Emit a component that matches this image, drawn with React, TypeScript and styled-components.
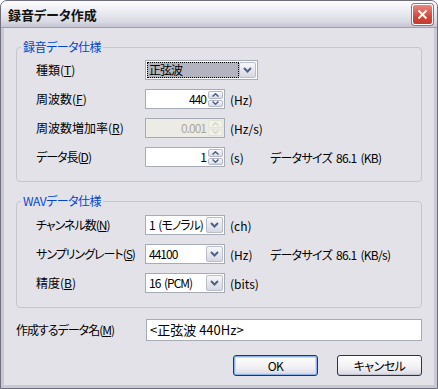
import React from 'react';
import styled, { createGlobalStyle } from 'styled-components';

const GlobalStyle = createGlobalStyle`
  * { box-sizing: border-box; }
  html, body { margin: 0; padding: 0; background: #ffffff; }
  body {
    font-family: "Noto Sans CJK JP", "Noto Sans", sans-serif;
    font-size: 12px;
    font-feature-settings: "palt";
    color: #000;
  }
`;

const FACE = '#e3e2e8';

const Window = styled.div`
  width: 438px;
  height: 389px;
  border: 1px solid #6f6f80;
  border-radius: 7px 7px 0 0;
  background: #c9c9d6;
  display: flex;
  flex-direction: column;
  overflow: hidden;
`;

const TitleBar = styled.div`
  flex: none;
  height: 27px;
  display: flex;
  align-items: center;
  justify-content: space-between;
  padding: 0 4px 0 7px;
  background: linear-gradient(#fdfdfe 0%, #ececf3 40%, #d9d9e4 80%, #c4c4d3 100%);
  border-bottom: 1px solid #a0a0b2;
`;

const Title = styled.span`
  font-size: 13px;
  font-weight: bold;
  color: #111;
`;

const CloseButton = styled.div`
  width: 21px;
  height: 21px;
  border: 1px solid #fff;
  border-radius: 3px;
  background: linear-gradient(#e88a7e, #d0493a 60%, #c23c30);
  box-shadow: 0 0 0 1px #b06a62;
  display: flex;
  align-items: center;
  justify-content: center;
`;

const Body = styled.div`
  flex: 1;
  margin: 0 3px 3px;
  background: ${FACE};
  padding: 19px 12px 0;
  display: flex;
  flex-direction: column;
`;

const Group = styled.div<{ $gap: number }>`
  border: 1px solid #c6c6cd;
  border-radius: 4px;
  padding: 0 0 14px 19px;
  display: flex;
  flex-direction: column;
  & + & {
    margin-top: 19px;
  }
  > div:last-child {
    margin-top: ${(p) => p.$gap}px;
  }
`;

const Caption = styled.div`
  align-self: flex-start;
  margin: -8px 0 0 -15px;
  padding: 0 2px;
  height: 14px;
  line-height: 14px;
  letter-spacing: -0.5px;
  background: ${FACE};
  color: #0046d5;
`;

const Rows = styled.div`
  display: flex;
  flex-direction: column;
  gap: 9px;
`;

const Row = styled.div`
  height: 20px;
  display: flex;
  align-items: center;
`;

const Label = styled.span<{ $width: number; $tight?: boolean }>`
  flex: none;
  width: ${(p) => p.$width}px;
  white-space: nowrap;
  line-height: 14px;
  letter-spacing: ${(p) => (p.$tight ? '-1px' : '0')};
`;

const Unit = styled.span`
  flex: none;
  width: 40px;
  margin-left: 5px;
  white-space: nowrap;
`;

const Info = styled.span`
  white-space: nowrap;
  letter-spacing: -0.7px;
  word-spacing: 2px;
`;

const Field = styled.div<{ $width: number; $disabled?: boolean }>`
  flex: none;
  width: ${(p) => p.$width}px;
  height: 20px;
  border: 1px solid #a5acb5;
  background: ${(p) => (p.$disabled ? '#ecebe6' : '#fff')};
  display: flex;
  padding: 1px;
`;

const Value = styled.span<{ $align?: string; $disabled?: boolean; $selected?: boolean }>`
  flex: 1;
  text-align: ${(p) => p.$align || 'left'};
  padding: 0 2px;
  line-height: 16px;
  white-space: nowrap;
  overflow: hidden;
  letter-spacing: -1px;
  word-spacing: 2px;
  color: ${(p) => (p.$disabled ? '#aca899' : '#000')};
  background: ${(p) => (p.$selected ? '#b3b4bf' : 'transparent')};
  outline: ${(p) => (p.$selected ? '1px dotted #000' : 'none')};
  outline-offset: -1px;
`;

const SpinButtons = styled.div`
  flex: none;
  width: 15px;
  display: flex;
  flex-direction: column;
  gap: 1px;
`;

const SpinHalf = styled.div<{ $disabled?: boolean }>`
  flex: 1;
  border-radius: 2px;
  border: 1px solid ${(p) => (p.$disabled ? '#e2e4d8' : '#b4b8c8')};
  background: ${(p) =>
    p.$disabled ? '#f2f2ea' : 'linear-gradient(#fafafc, #d8dae4)'};
  display: flex;
  align-items: center;
  justify-content: center;
`;

const DropButton = styled.div`
  flex: none;
  width: 17px;
  border-radius: 2px;
  border: 1px solid #b8bccb;
  background: linear-gradient(#f7f7fa, #d6d8e2);
  display: flex;
  align-items: center;
  justify-content: center;
`;

const NameRow = styled.div`
  margin-top: 11px;
  height: 22px;
  display: flex;
  align-items: center;
`;

const NameInput = styled.div`
  flex: 1;
  height: 22px;
  border: 1px solid #a5acb5;
  background: #fff;
  padding: 0 3px;
  line-height: 20px;
  font-size: 13px;
  white-space: nowrap;
`;

const ButtonRow = styled.div`
  margin-top: 14px;
  display: flex;
  justify-content: flex-end;
  gap: 19px;
`;

const PushButton = styled.div<{ $default?: boolean }>`
  width: 85px;
  height: 21px;
  border: 1px solid #1c3764;
  border-radius: 3px;
  background: linear-gradient(#ffffff, #f0f0f4 60%, #d8d8e2);
  box-shadow: ${(p) =>
    p.$default ? 'inset 0 0 0 1px #8eb4ee, inset 0 0 0 2px #c8daf6' : 'inset 0 -1px 0 #c4c4d0'};
  display: flex;
  align-items: center;
  justify-content: center;
  line-height: 14px;
  letter-spacing: -0.5px;
`;

const Arrow = ({ up, disabled }: { up?: boolean; disabled?: boolean }) => (
  <svg width="7" height="4" viewBox="0 0 7 4">
    <path
      d={up ? 'M0.5 3.5 L3.5 0.8 L6.5 3.5' : 'M0.5 0.5 L3.5 3.2 L6.5 0.5'}
      fill="none"
      stroke={disabled ? '#d4d6c8' : '#4d6185'}
      strokeWidth="1.5"
    />
  </svg>
);

const Chevron = () => (
  <svg width="9" height="6" viewBox="0 0 9 6">
    <path d="M1 1 L4.5 4.5 L8 1" fill="none" stroke="#4d6185" strokeWidth="2" />
  </svg>
);

const Spin = ({ value, disabled }: { value: string; disabled?: boolean }) => (
  <Field $width={80} $disabled={disabled}>
    <Value $align="right" $disabled={disabled}>
      {value}
    </Value>
    <SpinButtons>
      <SpinHalf $disabled={disabled}>
        <Arrow up disabled={disabled} />
      </SpinHalf>
      <SpinHalf $disabled={disabled}>
        <Arrow disabled={disabled} />
      </SpinHalf>
    </SpinButtons>
  </Field>
);

const Combo = ({ value, width, selected }: { value: string; width: number; selected?: boolean }) => (
  <Field $width={width}>
    <Value $selected={selected}>{value}</Value>
    <DropButton>
      <Chevron />
    </DropButton>
  </Field>
);

const App = () => (
  <>
    <GlobalStyle />
    <Window>
      <TitleBar>
        <Title>録音データ作成</Title>
        <CloseButton>
          <svg width="11" height="11" viewBox="0 0 11 11">
            <path d="M1.5 1.5 L9.5 9.5 M9.5 1.5 L1.5 9.5" stroke="#fff" strokeWidth="2" />
          </svg>
        </CloseButton>
      </TitleBar>
      <Body>
        <Group $gap={6}>
          <Caption>録音データ仕様</Caption>
          <Rows>
            <Row>
              <Label $width={109}>
                種類(<u>T</u>)
              </Label>
              <Combo value="正弦波" width={113} selected />
            </Row>
            <Row>
              <Label $width={109}>
                周波数(<u>F</u>)
              </Label>
              <Spin value="440" />
              <Unit>(Hz)</Unit>
            </Row>
            <Row>
              <Label $width={109}>
                周波数増加率(<u>R</u>)
              </Label>
              <Spin value="0.001" disabled />
              <Unit>(Hz/s)</Unit>
            </Row>
            <Row>
              <Label $width={109} $tight>
                データ長(<u>D</u>)
              </Label>
              <Spin value="1" />
              <Unit>(s)</Unit>
              <Info>データサイズ 86.1 (KB)</Info>
            </Row>
          </Rows>
        </Group>
        <Group $gap={7}>
          <Caption>WAVデータ仕様</Caption>
          <Rows>
            <Row>
              <Label $width={109} $tight>
                チャンネル数(<u>N</u>)
              </Label>
              <Combo value="1 (モノラル)" width={80} />
              <Unit>(ch)</Unit>
            </Row>
            <Row>
              <Label $width={109} $tight>
                サンプリングレート(<u>S</u>)
              </Label>
              <Combo value="44100" width={80} />
              <Unit>(Hz)</Unit>
              <Info>データサイズ 86.1 (KB/s)</Info>
            </Row>
            <Row>
              <Label $width={109}>
                精度(<u>B</u>)
              </Label>
              <Combo value="16 (PCM)" width={80} />
              <Unit>(bits)</Unit>
            </Row>
          </Rows>
        </Group>
        <NameRow>
          <Label $width={130} $tight>
            作成するデータ名(<u>M</u>)
          </Label>
          <NameInput>&lt;正弦波 440Hz&gt;</NameInput>
        </NameRow>
        <ButtonRow>
          <PushButton $default>OK</PushButton>
          <PushButton>キャンセル</PushButton>
        </ButtonRow>
      </Body>
    </Window>
  </>
);

export default App;
